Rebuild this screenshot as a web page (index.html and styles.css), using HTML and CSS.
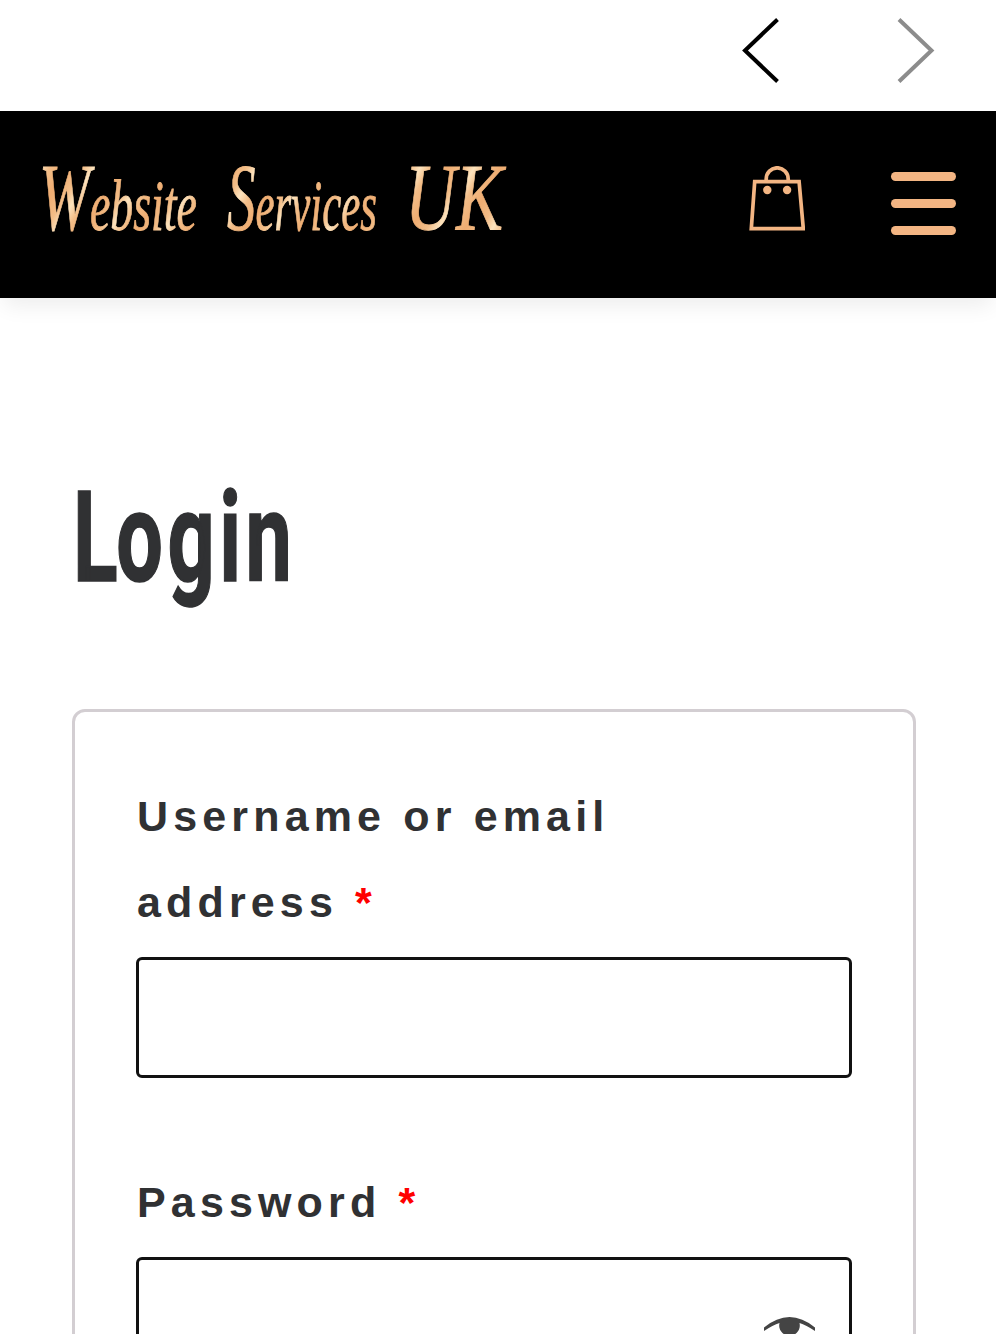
FILE: index.html
```html
<!DOCTYPE html>
<html lang="en">
<head>
    <meta charset="UTF-8">
    <meta name="viewport" content="width=device-width, initial-scale=1.0">
    <title>Login - Website Services UK</title>
    <link rel="stylesheet" href="styles.css">
</head>
<body>
    <div class="page">
        <nav class="pager">
            <svg class="arrow" width="40" height="68" viewBox="0 0 40 68"><path d="M36.5 2.5L4 33.5L36.5 64.5"/></svg>
            <svg class="arrow arrow-next" width="40" height="68" viewBox="0 0 40 68"><path d="M3 2.5L35.5 33.5L3 64.5"/></svg>
        </nav>

        <header class="header">
            <svg class="logo" width="500" height="140" viewBox="0 0 500 140">
                <defs>
                    <linearGradient id="gold" x1="0" y1="0" x2="20" y2="12" gradientUnits="userSpaceOnUse" spreadMethod="reflect">
                        <stop offset="0" stop-color="#efad72"/>
                        <stop offset="0.6" stop-color="#f3bd87"/>
                        <stop offset="1" stop-color="#fde3bd"/>
                    </linearGradient>
                </defs>
                <g class="logo-text" fill="url(#gold)" stroke="url(#gold)">
                    <text x="5" y="99" textLength="158" lengthAdjust="spacingAndGlyphs"><tspan class="cap">W</tspan>ebsite</text>
                    <text x="193" y="99" textLength="150" lengthAdjust="spacingAndGlyphs"><tspan class="cap">S</tspan>ervices</text>
                    <text x="371" y="99" textLength="98" lengthAdjust="spacingAndGlyphs" class="cap">UK</text>
                </g>
            </svg>
            <div class="header-icons">
                <svg class="bag" width="56" height="66" viewBox="0 0 56 66">
                    <path d="M5.7 15.7H50.1L54.3 62.6H2.3Z"/>
                    <path d="M17.2 14V13A11 11.2 0 0 1 39.2 13V14"/>
                    <circle cx="18.3" cy="24" r="4.2"/>
                    <circle cx="38.1" cy="24" r="4.2"/>
                </svg>
                <div class="menu">
                    <span></span>
                    <span></span>
                    <span></span>
                </div>
            </div>
        </header>

        <main class="content">
            <h1 class="title">Login</h1>

            <form class="login-form">
                <div class="form-row">
                    <label for="username">Username or email address&nbsp;<span class="required">*</span></label>
                    <input type="text" id="username">
                </div>
                <div class="form-row">
                    <label for="password">Password&nbsp;<span class="required">*</span></label>
                    <div class="password-input">
                        <input type="password" id="password">
                        <svg class="eye" width="52" height="38" viewBox="0 0 52 38">
                            <path d="M0 10.5Q25.5 -10.5 51 10.5V14Q42 8 35.5 6A10.3 10.3 0 1 1 15.5 6Q9 8 0 14Z"/>
                        </svg>
                    </div>
                </div>
            </form>
        </main>
    </div>
</body>
</html>
```

FILE: styles.css
```css
* {
    margin: 0;
    padding: 0;
    box-sizing: border-box;
}

body {
    font-family: "Liberation Sans", Arial, sans-serif;
    background: #fff;
    color: #303133;
}

.page {
    width: 996px;
    height: 1334px;
    overflow: hidden;
}

.pager {
    display: flex;
    justify-content: flex-end;
    gap: 115px;
    height: 111px;
    padding: 17px 60px 0 0;
}

.arrow {
    fill: none;
    stroke: #000;
    stroke-width: 4;
}

.arrow-next {
    stroke: #8c8c8c;
}

.header {
    display: flex;
    justify-content: space-between;
    height: 187px;
    padding: 20px 40px 0 34px;
    background: #000;
    box-shadow: 0 12px 20px -4px rgba(0, 0, 0, 0.07);
}

.logo-text {
    font-family: "Liberation Serif", "Times New Roman", cursive;
    font-size: 72px;
    font-style: italic;
    stroke-width: 0.8;
}

.logo-text .cap {
    font-size: 96px;
}

.header-icons {
    display: flex;
    gap: 86px;
    padding-top: 35px;
}

.bag {
    fill: none;
    stroke: #f3b583;
    stroke-width: 3.7;
}

.bag circle {
    fill: #f3b583;
    stroke: none;
}

.menu {
    display: flex;
    flex-direction: column;
    gap: 18px;
    width: 65px;
    padding-top: 6px;
}

.menu span {
    height: 9px;
    border-radius: 5px;
    background: #f3b583;
}

.content {
    padding: 165px 80px 0 73px;
}

.title {
    width: max-content;
    height: 246px;
    font-family: Roboto, sans-serif;
    font-size: 127px;
    font-weight: 700;
    line-height: 150px;
    letter-spacing: 7px;
    transform: scaleX(0.65);
    transform-origin: 0 0;
    -webkit-text-stroke: 1.5px #303133;
}

.title::first-letter {
    margin-right: -9px;
}

.login-form {
    height: 760px;
    margin-left: -1px;
    padding: 61px 61px 0;
    border: 3px solid #d3ced2;
    border-radius: 13px;
}

.form-row {
    margin-bottom: 81px;
}

.form-row label {
    display: block;
    margin-bottom: 12px;
    padding-left: 1px;
    font-size: 43px;
    font-weight: 700;
    line-height: 86px;
    letter-spacing: 5.15px;
}

.required {
    color: #f00;
}

.form-row input {
    display: block;
    width: 100%;
    height: 121px;
    padding: 0 30px;
    border: 3px solid #111;
    border-radius: 6px;
    background: #fff;
    font-size: 43px;
}

.password-input {
    position: relative;
}

.eye {
    position: absolute;
    top: 60px;
    right: 36px;
    fill: #444;
}
```
